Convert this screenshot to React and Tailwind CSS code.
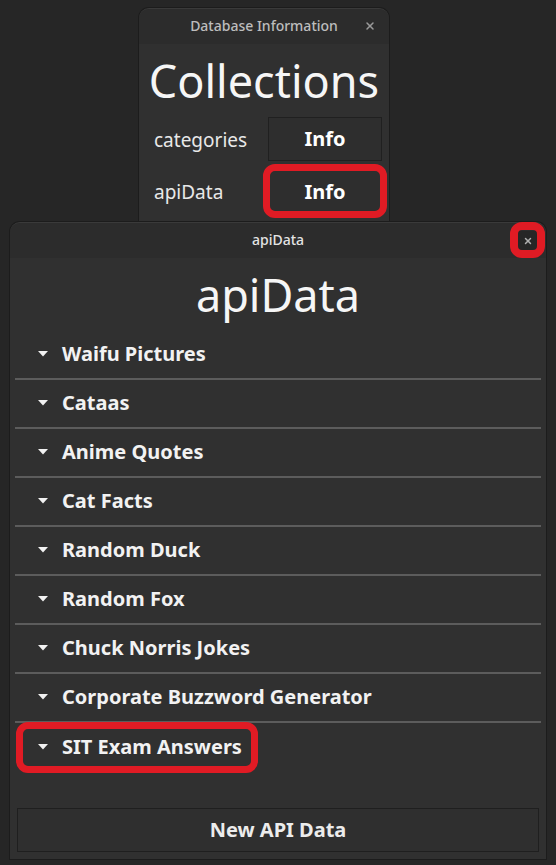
import { X } from 'lucide-react';

const font = { fontFamily: '"Noto Sans", "Open Sans", sans-serif' };

const apis = [
  'Waifu Pictures',
  'Cataas',
  'Anime Quotes',
  'Cat Facts',
  'Random Duck',
  'Random Fox',
  'Chuck Norris Jokes',
  'Corporate Buzzword Generator',
  'SIT Exam Answers',
];

const Ring = ({ className }) => (
  <div className={`absolute pointer-events-none border-[7px] border-[#e01b24] rounded-[12px] ${className}`}></div>
);

const Caret = () => (
  <svg width="10" height="6" viewBox="0 0 10 6" className="shrink-0">
    <path d="M0 0 L10 0 L5 5.5 Z" fill="#f2f2f2" />
  </svg>
);

export default function App() {
  return (
    <div className="relative w-[556px] h-[865px] bg-[#262626] overflow-hidden text-white" style={font}>
      {/* Database Information window */}
      <div className="absolute left-[139px] top-[8px] w-[250px] h-[260px] rounded-t-[10px] bg-[#303030] shadow-[0_0_0_1px_#1c1c1c] border-t border-[#3a3a3a] overflow-hidden">
        <div className="relative h-[35px] pb-[3px] bg-[#2c2c2c] flex items-center justify-center">
          <span className="text-[14px] text-[#bdbdbd] font-medium">Database Information</span>
          <X className="absolute right-[13px] top-[11px] w-[12px] h-[12px] text-[#9a9a9a]" strokeWidth={3} />
        </div>
        <div className="h-[73px] flex items-center justify-center">
          <h1 className="text-[45px] leading-none text-[#f6f6f6]">Collections</h1>
        </div>
        <div className="flex flex-col gap-[9px] pl-[15px] pr-[7px]">
          <div className="flex items-center justify-between h-[44px]">
            <span className="text-[19px] text-[#e8e8e8] pt-[2px]">categories</span>
            <button className="w-[114px] h-[44px] border border-[#202020] bg-[#2e2e2e] text-[20px] font-bold">Info</button>
          </div>
          <div className="flex items-center justify-between h-[44px]">
            <span className="text-[19px] text-[#e8e8e8]">apiData</span>
            <button className="w-[114px] h-[44px] border border-[#202020] bg-[#2e2e2e] text-[20px] font-bold">Info</button>
          </div>
        </div>
      </div>
      <Ring className="left-[263px] top-[164px] w-[124px] h-[54px]" />

      {/* apiData window */}
      <div className="absolute left-[10px] top-[222px] w-[536px] h-[637px] rounded-t-[10px] bg-[#303030] shadow-[0_0_0_1px_#1c1c1c] border-t border-[#3a3a3a] flex flex-col overflow-hidden">
        <div className="relative h-[35px] pb-[2px] shrink-0 bg-[#2c2c2c] flex items-center justify-center">
          <span className="text-[14px] font-medium text-[#e4e4e4]">apiData</span>
          <div className="absolute right-[9px] top-[8px] w-[19px] h-[19px] bg-[#262626] flex items-center justify-center">
            <X className="w-[10px] h-[10px] text-[#b0b0b0]" strokeWidth={3.5} />
          </div>
        </div>
        <div className="h-[73px] shrink-0 flex items-center justify-center">
          <h2 className="text-[45px] leading-none text-[#f6f6f6]">apiData</h2>
        </div>
        <div className="mx-[5px] flex flex-col">
          {apis.map((name, i) => (
            <div
              key={name}
              className={`h-[49px] pb-[2px] flex items-center gap-[14px] pl-[23px] ${i < apis.length - 1 ? 'border-b-2 border-[#5c5c5c]' : ''}`}
            >
              <Caret />
              <span className="text-[20px] font-bold text-[#f2f2f2]">{name}</span>
            </div>
          ))}
        </div>
        <div className="flex-1"></div>
        <div className="px-[7px] pb-[7px]">
          <button className="w-full h-[44px] border border-[#1f1f1f] bg-[#2f2f2f] text-[20px] font-bold text-[#ececec]">New API Data</button>
        </div>
      </div>
      <Ring className="left-[510px] top-[222px] w-[35px] h-[36px] border-[8px] rounded-[9px]" />
      <Ring className="left-[16px] top-[722px] w-[242px] h-[51px]" />
    </div>
  );
}
